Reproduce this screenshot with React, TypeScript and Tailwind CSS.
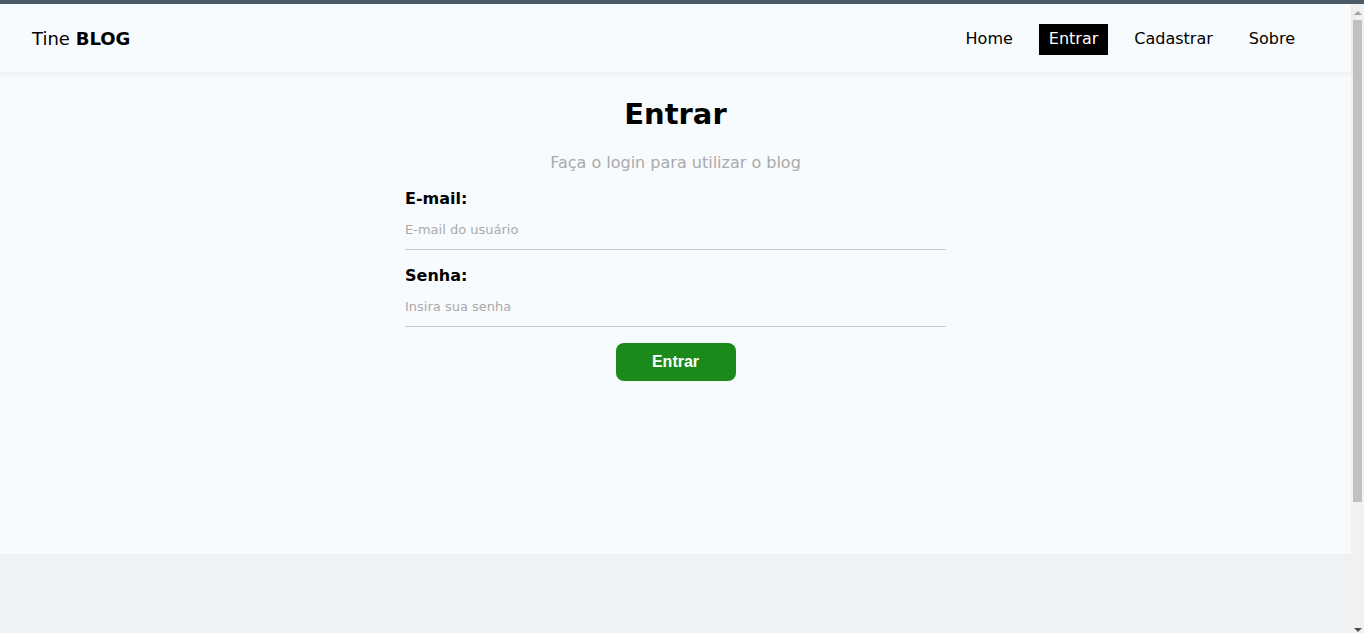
import React from "react";

const font = { fontFamily: '"DejaVu Sans", "Open Sans", sans-serif' };

function Scrollbar() {
  return (
    <div className="w-[13px] bg-[#f1f1f1] flex flex-col items-center">
      <div className="h-[16px] flex items-center justify-center pt-[2px]">
        <div className="w-0 h-0 border-l-[4px] border-r-[4px] border-b-[4px] border-l-transparent border-r-transparent border-b-[#a3a3a3]" />
      </div>
      <div className="w-[9px] h-[482px] bg-[#c1c1c1]" />
      <div className="flex-1" />
      <div className="h-[12px] flex items-end justify-center pb-[1px]">
        <div className="w-0 h-0 border-l-[4px] border-r-[4px] border-t-[4px] border-l-transparent border-r-transparent border-t-[#505050]" />
      </div>
    </div>
  );
}

export default function App() {
  const links = ["Home", "Entrar", "Cadastrar", "Sobre"];
  return (
    <div className="h-[633px] overflow-hidden flex flex-col bg-[#eef2f5]" style={font}>
      <div className="h-[4px] bg-[#4a5a66]" />
      <div className="flex flex-1">
        <div className="flex-1 flex flex-col">
          {/* Cabeçalho */}
          <header className="h-[68px] bg-[#f7fbfe] shadow-[0_2px_6px_rgba(0,0,0,0.06)] flex items-center justify-between pl-[32px] pr-[46px] relative z-10">
            <div className="text-[18px] text-black leading-[24px] pt-[2px]">
              Tine <span className="font-bold">BLOG</span>
            </div>
            <nav className="flex items-center gap-[16px] pt-[2px]">
              {links.map((l) => (
                <a
                  key={l}
                  className={`px-[10px] h-[31px] flex items-center text-[16px] ${
                    l === "Entrar" ? "bg-black text-white" : "text-black"
                  }`}
                >
                  {l}
                </a>
              ))}
            </nav>
          </header>

          {/* Conteúdo */}
          <main className="h-[482px] bg-[#f7fbfe] flex flex-col items-center">
            <h1 className="text-[29px] font-bold text-black mt-[20px] leading-[44px]">Entrar</h1>
            <p className="text-[16px] text-[#aaaaaa] mt-[16px] leading-[22px]">
              Faça o login para utilizar o blog
            </p>
            <form className="w-[541px] flex flex-col mt-[14px]">
              <label className="font-bold text-[16px] text-black leading-[22px]">E-mail:</label>
              <input
                placeholder="E-mail do usuário"
                className="h-[40px] bg-transparent border-b border-[#cccccc] text-[13px] placeholder:text-[#aaaaaa] outline-none"
                style={font}
              />
              <label className="font-bold text-[16px] text-black leading-[22px] mt-[15px]">Senha:</label>
              <input
                type="password"
                placeholder="Insira sua senha"
                className="h-[40px] bg-transparent border-b border-[#cccccc] text-[13px] placeholder:text-[#aaaaaa] outline-none"
                style={font}
              />
              <button
                type="button"
                className="self-center mt-[16px] w-[120px] h-[38px] rounded-[8px] bg-[#1b8a1b] text-white font-bold text-[16px]"
                style={{ fontFamily: '"Liberation Sans", Arial, sans-serif' }}
              >
                Entrar
              </button>
            </form>
          </main>
          <div className="flex-1 bg-[#eef2f5]" />
        </div>
        <Scrollbar />
      </div>
    </div>
  );
}
